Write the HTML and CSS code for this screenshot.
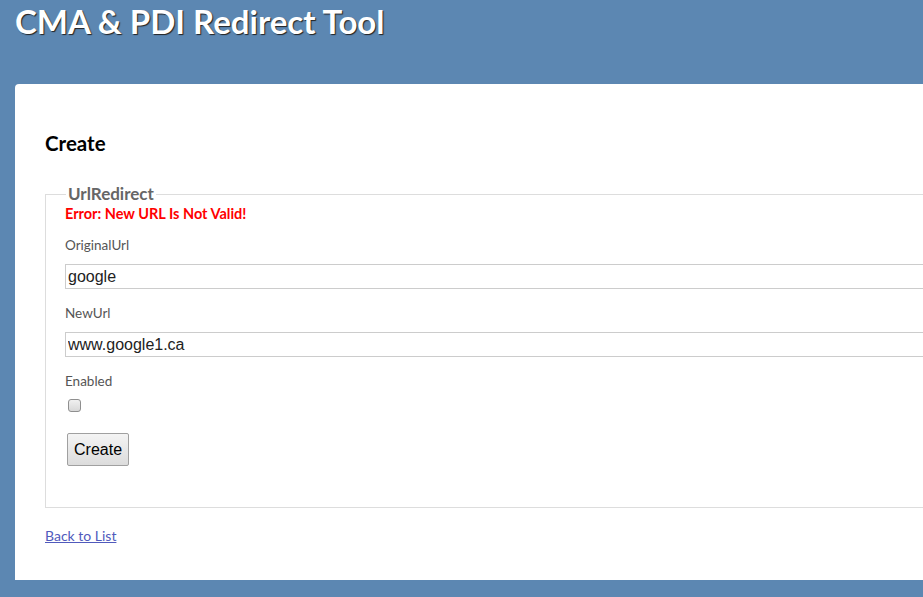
FILE: index.html
```html
<!DOCTYPE html>
<html>
<head>
<meta charset="utf-8">
<title>Create</title>
<link rel="stylesheet" href="styles.css">
</head>
<body>
<div class="page">
  <header class="header">
    <h1 class="title">CMA &amp; PDI Redirect Tool</h1>
  </header>
  <section class="main">
    <h2 class="heading">Create</h2>
    <form class="form">
      <fieldset class="fieldset">
        <legend class="legend">UrlRedirect</legend>
        <div class="error">Error: New URL Is Not Valid!</div>
        <div class="label">OriginalUrl</div>
        <div class="field"><input class="text" type="text" value="google"></div>
        <div class="label">NewUrl</div>
        <div class="field"><input class="text" type="text" value="www.google1.ca"></div>
        <div class="label">Enabled</div>
        <div class="field check-field"><input class="check" type="checkbox"></div>
        <div class="actions"><button class="button" type="button">Create</button></div>
      </fieldset>
    </form>
    <div class="back"><a class="link" href="#">Back to List</a></div>
  </section>
</div>
</body>
</html>
```
FILE: styles.css
```css
html, body {
  margin: 0;
  padding: 0;
}
body {
  background: #5c87b2;
  font-family: Lato, "DejaVu Sans", sans-serif;
  font-size: 13px;
  color: #696969;
  overflow: hidden;
  height: 597px;
}
.page {
  width: 1100px;
}
.header {
  height: 84px;
}
.title {
  margin: 0;
  padding: 0 0 0 15px;
  font-size: 33px;
  line-height: 42px;
  font-weight: bold;
  color: #fff;
  text-shadow: 1px 1px 1px #222;
}
.main {
  margin-left: 15px;
  background: #fff;
  border-radius: 4px 0 0 0;
  padding: 30px 30px 36px 30px;
  height: 430px;
}
.heading {
  margin: 0;
  padding-top: 15px;
  font-size: 20.5px;
  line-height: 28px;
  font-weight: bold;
  color: #000;
}
.form {
  margin-top: 28px;
}
.fieldset {
  margin: 0;
  border: 1px solid #ddd;
  padding: 0 0 41px 19px;
}
.legend {
  padding: 0 2px;
  margin-left: 1px;
  font-size: 17px;
  font-weight: bold;
  color: #666;
  line-height: 18px;
}
.error {
  font-size: 14.5px;
  font-weight: bold;
  color: #f00;
  line-height: 16px;
  margin-top: 3px;
}
.label {
  font-size: 13.5px;
  color: #555;
  line-height: 18px;
  margin-top: 14px;
}
.field {
  margin-top: 10px;
}
.label + .field + .label {
  margin-top: 15px;
}
.text {
  box-sizing: border-box;
  display: block;
  width: 100%;
  height: 25px;
  margin: 0;
  border: 1px solid #ccc;
  padding: 0 2px;
  font-family: "Liberation Sans", Arial, sans-serif;
  font-size: 16px;
  color: #222;
  background: #fff;
}
.check-field {
  margin-top: 9px;
  height: 13px;
}
.check {
  display: block;
  appearance: none;
  -webkit-appearance: none;
  box-sizing: border-box;
  margin: 0 0 0 3px;
  width: 13px;
  height: 13px;
  border: 1px solid #8f8f8f;
  border-radius: 3px;
  background: linear-gradient(#f0f0f0, #d8d8d8);
}
.actions {
  margin-top: 21px;
}
.button {
  display: block;
  margin-left: 2px;
  height: 33px;
  padding: 0 6px;
  font-family: "Liberation Sans", Arial, sans-serif;
  font-size: 16px;
  color: #000;
  background: linear-gradient(#f4f4f4, #dcdcdc);
  border: 1px solid #a0a0a0;
  border-radius: 2px;
}
.back {
  margin-top: 19px;
  font-size: 14px;
  line-height: 18px;
}
.link {
  color: #505abc;
}
```
